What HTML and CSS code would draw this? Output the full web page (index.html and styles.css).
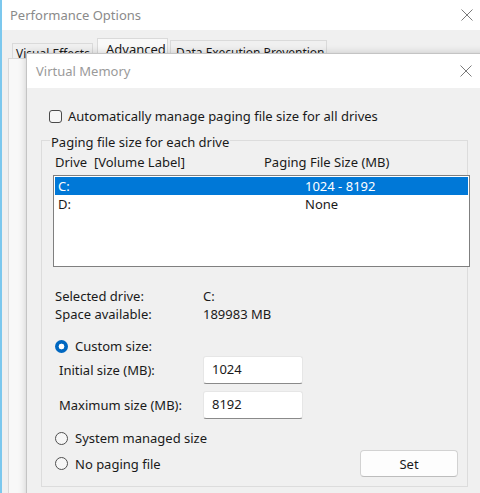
FILE: index.html
```html
<!DOCTYPE html>
<html>
<head>
<meta charset="utf-8">
<link rel="stylesheet" href="styles.css">
</head>
<body>
<div class="screen">
  <div class="perf">
    <div class="titlebar">
      <span class="title">Performance Options</span>
      <svg class="close" width="12" height="12" viewBox="0 0 12 12"><path d="M0.5 0.5 L11.5 11.5 M11.5 0.5 L0.5 11.5" stroke="#7a7a7a" stroke-width="1" fill="none"/></svg>
    </div>
    <div class="perf-body">
      <div class="tabs">
        <div class="tab t1">Visual Effects</div>
        <div class="tab sel">Advanced</div>
        <div class="tab t3">Data Execution Prevention</div>
      </div>
      <div class="tabpage"></div>
    </div>
  </div>

  <div class="vm">
    <div class="vm-title">
      <span class="title">Virtual Memory</span>
      <svg class="close" width="12" height="12" viewBox="0 0 12 12"><path d="M0.5 0.5 L11.5 11.5 M11.5 0.5 L0.5 11.5" stroke="#7a7a7a" stroke-width="1" fill="none"/></svg>
    </div>
    <div class="vm-body">
      <div class="check-row">
        <span class="checkbox"></span>
        <span>Automatically manage paging file size for all drives</span>
      </div>
      <div class="group">
        <div class="legend">Paging file size for each drive</div>
        <div class="list-head">
          <span class="col-drive">Drive&nbsp; [Volume Label]</span>
          <span>Paging File Size (MB)</span>
        </div>
        <div class="listbox">
          <div class="row selected"><span class="cell-drive">C:</span><span>1024 - 8192</span></div>
          <div class="row"><span class="cell-drive">D:</span><span>None</span></div>
        </div>
        <div class="info">
          <div class="info-line"><span class="info-label">Selected drive:</span><span>C:</span></div>
          <div class="info-line"><span class="info-label">Space available:</span><span>189983 MB</span></div>
        </div>
        <div class="radio-row custom">
          <span class="radio on"></span>
          <span>Custom size:</span>
        </div>
        <div class="size-row first">
          <span class="size-label">Initial size (MB):</span>
          <div class="textbox">1024</div>
        </div>
        <div class="size-row second">
          <span class="size-label">Maximum size (MB):</span>
          <div class="textbox">8192</div>
        </div>
        <div class="radio-row system">
          <span class="radio"></span>
          <span>System managed size</span>
        </div>
        <div class="last-row">
          <div class="radio-row">
            <span class="radio"></span>
            <span>No paging file</span>
          </div>
          <div class="button">Set</div>
        </div>
      </div>
    </div>
  </div>
</div>
</body>
</html>
```
FILE: styles.css
```css
html, body {
  margin: 0;
  padding: 0;
  background: #f0f0f0;
}
.screen {
  position: relative;
  width: 480px;
  height: 493px;
  overflow: hidden;
  font-family: "Noto Sans", "Open Sans", sans-serif;
  font-size: 13px;
  color: #1a1a1a;
}
.perf {
  height: 493px;
  border-left: 2px solid #7cc8ee;
  box-sizing: border-box;
  display: flex;
  flex-direction: column;
}
.titlebar {
  height: 30px;
  background: #ffffff;
  display: flex;
  align-items: center;
  justify-content: space-between;
  padding: 0 7px 0 8px;
  flex: none;
}
.title {
  color: #8a8a8a;
  font-size: 13px;
}
.perf-body {
  flex: 1;
  background: #f0f0f0;
  display: flex;
  flex-direction: column;
}
.tabs {
  height: 28px;
  display: flex;
  align-items: flex-end;
  padding-left: 10px;
  flex: none;
}
.tab {
  box-sizing: border-box;
  border: 1px solid #dadada;
  border-bottom: none;
  white-space: nowrap;
  line-height: 14px;
  padding-top: 3px;
  font-size: 12px;
}
.t1 {
  width: 81px;
  height: 15px;
  padding-left: 3px;
  background: #f0f0f0;
}
.sel {
  width: 71px;
  height: 20px;
  margin-left: 4px;
  background: #f9f9f9;
  padding-left: 8px;
  font-size: 13px;
}
.t3 {
  width: 157px;
  height: 18px;
  margin-left: 2px;
  padding-left: 5px;
  background: #f0f0f0;
  padding-top: 5px;
}
.tabpage {
  flex: 1;
  margin-left: 6px;
  border-left: 1px solid #d9d9d9;
  border-top: 1px solid #d9d9d9;
  background: #f8f8f8;
}

/* Virtual Memory dialog window */
.vm {
  position: absolute;
  left: 26px;
  top: 53px;
  width: 470px;
  height: 460px;
  box-sizing: border-box;
  border: 1px solid #c4c4c4;
  background: #f0f0f0;
  box-shadow: 0 0 8px rgba(0, 0, 0, 0.18);
}
.vm-title {
  height: 34px;
  background: #ffffff;
  display: flex;
  align-items: center;
  justify-content: space-between;
  padding: 0 23px 0 9px;
}
.vm-title .title {
  color: #9a9a9a;
}
.vm-body {
  display: flex;
  flex-direction: column;
}
.check-row {
  margin-top: 19px;
  padding-left: 22px;
  height: 18px;
  display: flex;
  align-items: center;
  gap: 6px;
}
.checkbox {
  width: 13px;
  height: 13px;
  box-sizing: border-box;
  border: 1px solid #4a4a4a;
  border-radius: 3px;
  background: #f6f6f6;
}
.group {
  margin-top: 15px;
  margin-left: 14px;
  width: 427px;
  box-sizing: border-box;
  border: 1px solid #dcdcdc;
  padding-bottom: 9px;
  display: flex;
  flex-direction: column;
}
.legend {
  margin-top: -7px;
  margin-left: 8px;
  padding: 0 1px;
  line-height: 16px;
  height: 16px;
  background: #f0f0f0;
  align-self: flex-start;
}
.list-head {
  margin-top: 4px;
  padding-left: 13px;
  line-height: 16px;
  height: 16px;
  display: flex;
}
.col-drive {
  width: 209px;
}
.listbox {
  margin-top: 5px;
  margin-left: 11px;
  width: 417px;
  height: 92px;
  box-sizing: border-box;
  border: 1px solid #7f7f7f;
  padding: 1px;
  background: #ffffff;
}
.row {
  height: 18px;
  line-height: 18px;
  padding-left: 3px;
  display: flex;
}
.row.selected {
  background: #0078d7;
  color: #ffffff;
}
.cell-drive {
  width: 247px;
}
.info {
  margin-top: 20px;
  padding-left: 13px;
}
.info-line {
  height: 18px;
  line-height: 18px;
  display: flex;
}
.info-label {
  width: 148px;
}
.radio-row {
  height: 16px;
  line-height: 16px;
  display: flex;
  align-items: center;
  gap: 7px;
}
.radio-row.custom {
  margin-top: 15px;
  padding-left: 13px;
}
.radio-row.system {
  margin-top: 11px;
  padding-left: 13px;
}
.radio {
  width: 13px;
  height: 13px;
  box-sizing: border-box;
  border-radius: 50%;
  border: 1px solid #4f4f4f;
  background: #f6f6f6;
  flex: none;
}
.radio.on {
  border: none;
  background: radial-gradient(circle, #ffffff 0, #ffffff 2.6px, #0067c0 3.2px);
}
.size-row {
  height: 28px;
  display: flex;
  align-items: center;
  padding-left: 17px;
}
.size-row.first {
  margin-top: 2px;
}
.size-row.second {
  margin-top: 7px;
}
.size-label {
  width: 144px;
}
.textbox {
  width: 100px;
  height: 28px;
  box-sizing: border-box;
  background: #ffffff;
  border: 1px solid #e6e6e6;
  border-bottom: 1px solid #8a8a8a;
  border-radius: 3px;
  padding-left: 8px;
  line-height: 25px;
}
.last-row {
  margin-top: 4px;
  height: 27px;
  padding: 0 9px 0 13px;
  display: flex;
  align-items: center;
  justify-content: space-between;
}
.button {
  width: 98px;
  height: 27px;
  box-sizing: border-box;
  background: #fdfdfd;
  border: 1px solid #d2d2d2;
  border-bottom-color: #bdbdbd;
  border-radius: 4px;
  display: flex;
  align-items: center;
  justify-content: center;
}
```
